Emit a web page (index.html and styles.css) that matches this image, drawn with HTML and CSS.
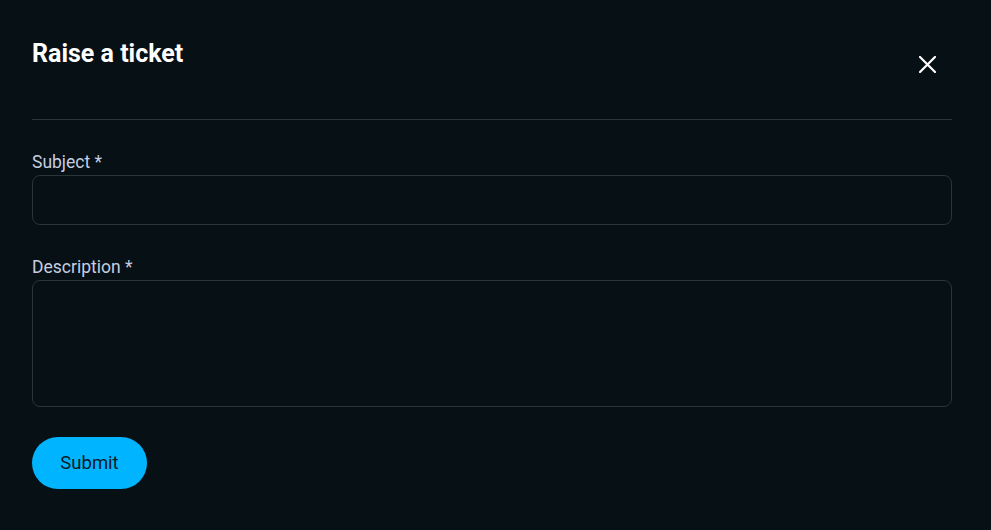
FILE: index.html
```html
<!DOCTYPE html>
<html>
<head>
<meta charset="utf-8">
<link rel="stylesheet" href="styles.css">
</head>
<body>
<div class="modal">
  <div class="header">
    <h1 class="title">Raise a ticket</h1>
    <button class="close" aria-label="Close">
      <svg width="17" height="17" viewBox="0 0 17 17"><path d="M1 1L16 16M16 1L1 16" stroke="#fff" stroke-width="2.2" stroke-linecap="square"/></svg>
    </button>
  </div>
  <form class="form">
    <div class="field">
      <label class="label">Subject *</label>
      <input class="input" type="text">
    </div>
    <div class="field">
      <label class="label">Description *</label>
      <textarea class="textarea"></textarea>
    </div>
    <button type="button" class="submit">Submit</button>
  </form>
</div>
</body>
</html>
```
FILE: styles.css
```css
html, body {
  margin: 0;
  padding: 0;
  background: #071015;
  height: 100%;
}
body {
  font-family: Roboto, "Liberation Sans", sans-serif;
  color: #fff;
}
.modal {
  padding: 38px 39px 40px 32px;
}
.header {
  display: flex;
  justify-content: space-between;
  align-items: flex-start;
  height: 81px;
  border-bottom: 1px solid #2b3438;
}
.title {
  margin: 0;
  font-size: 25px;
  line-height: 32px;
  font-weight: 700;
  color: #fff;
}
.close {
  background: none;
  border: 0;
  padding: 0;
  margin: 18px 16px 0 0;
  width: 17px;
  height: 17px;
  display: flex;
  cursor: pointer;
}
.form {
  display: flex;
  flex-direction: column;
  align-items: flex-start;
  padding-top: 31px;
}
.field {
  display: flex;
  flex-direction: column;
  width: 100%;
  margin-bottom: 31px;
}
.label {
  font-size: 17.5px;
  line-height: 22px;
  color: #c5cee0;
  margin-bottom: 2px;
}
.input, .textarea {
  box-sizing: border-box;
  width: 100%;
  background: transparent;
  border: 1px solid #2b3436;
  border-radius: 8px;
  color: #fff;
  font-family: inherit;
  font-size: 16px;
  outline: none;
}
.input {
  height: 50px;
}
.textarea {
  height: 127px;
  resize: none;
  display: block;
}
.submit {
  width: 115px;
  height: 52px;
  border: 0;
  border-radius: 26px;
  background: #00b4ff;
  color: #0b1a26;
  font-family: inherit;
  font-size: 18.5px;
  font-weight: 400;
  cursor: pointer;
  margin-top: -1px;
}
```
